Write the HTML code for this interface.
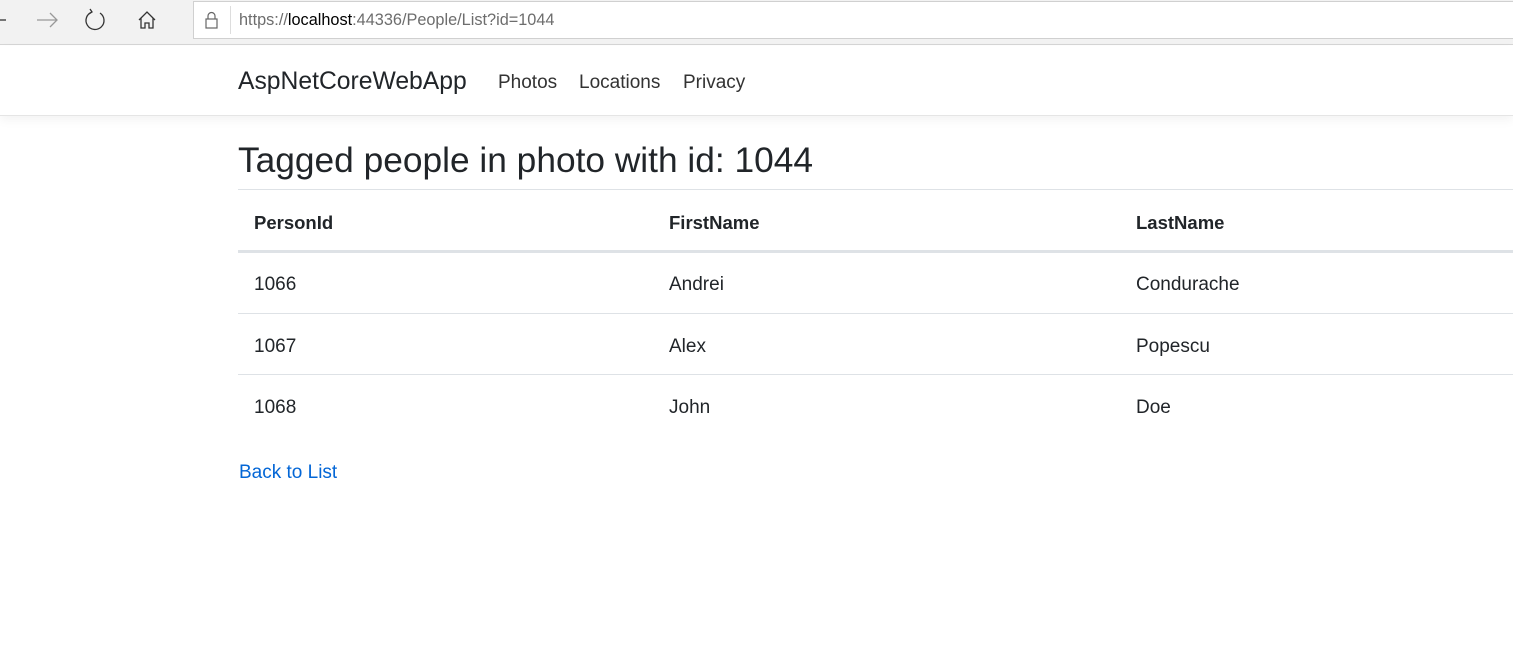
<!DOCTYPE html>
<html><head><style>
*{box-sizing:border-box;margin:0;padding:0}
body{width:1513px;height:655px;background:#fff;font-family:"Segoe UI","Liberation Sans",sans-serif;color:#212529;position:relative;overflow:hidden}
.bar{position:absolute;left:0;top:0;width:1513px;height:45px;background:#f2f2f2;border-bottom:1px solid #d6d6d6}
.addr{position:absolute;left:193px;top:1px;right:-2px;height:38px;background:#fff;border:1px solid #d0d0d0}
.url{position:absolute;left:239px;top:11px;font-size:16.3px;color:#6d6d6d}
.url b{font-weight:normal;color:#000}
.nav{position:absolute;left:0;top:46px;width:1513px;height:70px;border-bottom:1px solid #e5e5e5;box-shadow:0 4px 10px rgba(0,0,0,0.05)}
.brand{position:absolute;left:238px;top:22px;font-size:24.7px;color:#212529}
.lnk{position:absolute;top:26px;font-size:19px;color:#333}
h1{position:absolute;left:238px;top:141px;font-size:35.3px;font-weight:normal;color:#212529}
.hr{position:absolute;left:238px;right:0;height:1px;background:#dee2e6}
.t{position:absolute;font-size:19px}
.th{font-weight:bold;font-size:18.5px}
a{color:#0366d6;text-decoration:none}
</style></head><body>
<div class="bar">
<svg width="190" height="45" style="position:absolute;left:0;top:0" fill="none" stroke="#333" stroke-width="1.3">
<line x1="0" y1="20" x2="6" y2="20"/>
<path d="M37 20H57M50 13L57 20L50 27" stroke="#999"/>
<path d="M92 12A9 9 0 1 0 100 13M90 9L92 12L89 14"/>
<path d="M139 20L147 12L155 20M141 18V28H145V23H149V28H153V18"/>
</svg>
<div class="addr"></div>
<svg width="20" height="20" style="position:absolute;left:202px;top:11px" fill="none" stroke="#666" stroke-width="1.2"><rect x="4" y="8" width="11" height="9"/><path d="M6 8V5A3.5 3.5 0 0 1 13 5V8"/></svg>
<div style="position:absolute;left:230px;top:6px;width:1px;height:28px;background:#ddd"></div>
<div class="url">https://<b>localhost</b>:44336/People/List?id=1044</div>
</div>
<div class="nav">
<div class="brand">AspNetCoreWebApp</div>
<div class="lnk" style="left:498px">Photos</div>
<div class="lnk" style="left:579px">Locations</div>
<div class="lnk" style="left:683px">Privacy</div>
</div>
<h1>Tagged people in photo with id: 1044</h1>
<div class="hr" style="top:189px"></div>
<div class="t th" style="left:254px;top:212px">PersonId</div>
<div class="t th" style="left:669px;top:212px">FirstName</div>
<div class="t th" style="left:1136px;top:212px">LastName</div>
<div class="hr" style="top:250px;height:3px"></div>
<div class="t" style="left:254px;top:274px">1066</div><div class="t" style="left:669px;top:274px">Andrei</div><div class="t" style="left:1136px;top:274px">Condurache</div>
<div class="hr" style="top:313px"></div>
<div class="t" style="left:254px;top:336px">1067</div><div class="t" style="left:669px;top:336px">Alex</div><div class="t" style="left:1136px;top:336px">Popescu</div>
<div class="hr" style="top:374px"></div>
<div class="t" style="left:254px;top:397px">1068</div><div class="t" style="left:669px;top:397px">John</div><div class="t" style="left:1136px;top:397px">Doe</div>
<div class="t" style="left:239px;top:462px"><a href="#">Back to List</a></div>
</body></html>
